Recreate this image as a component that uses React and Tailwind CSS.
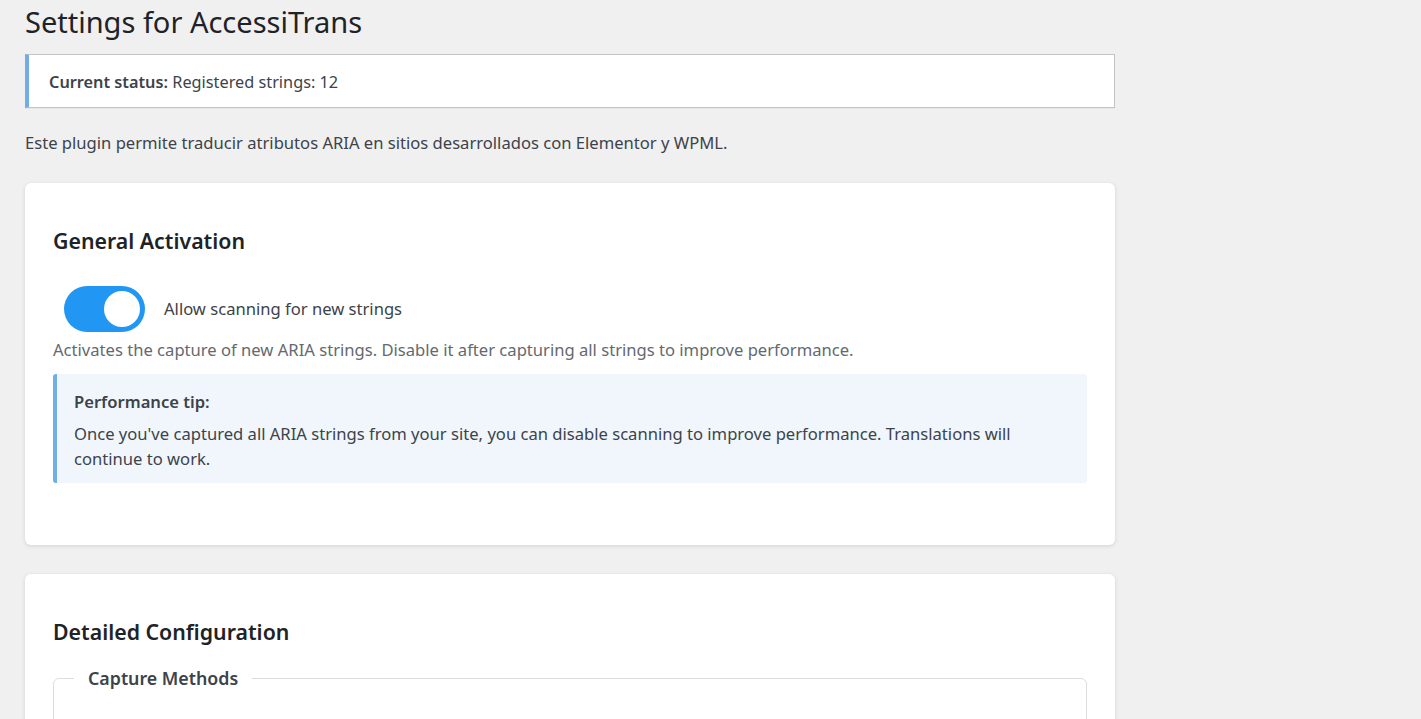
export default function App() {
  return (
    <div className="min-h-[719px] bg-[#f0f0f1] text-[#3c434a]" style={{ fontFamily: '"Noto Sans", "Open Sans", sans-serif' }}>
      <div className="w-[1090px] ml-[25px] pb-10">
        <h1 className="text-[29px] font-normal text-[#1d2327] pt-[3px] leading-[38px]">Settings for AccessiTrans</h1>
        <div className="mt-[13px] h-[54px] bg-white border border-[#c3c4c7] border-l-[4px] border-l-[#72aee6] flex items-center pl-[20px] pt-[2px] text-[16.3px] text-[#3c434a] shadow-[0_1px_1px_rgba(0,0,0,0.04)]">
          <span><span className="font-semibold">Current status:</span> Registered strings: 12</span>
        </div>
        <p className="mt-[23px] text-[16.6px] leading-[24px]">Este plugin permite traducir atributos ARIA en sitios desarrollados con Elementor y WPML.</p>

        <div className="mt-[28px] bg-white rounded-[6px] shadow-[0_1px_4px_rgba(0,0,0,0.12)] px-[28px] pt-[44px] pb-[62px]">
          <h2 className="text-[21.3px] font-semibold text-[#1d2327] leading-[28px]">General Activation</h2>
          <div className="mt-[31px] flex items-center ml-[11px]">
            <div className="relative w-[81px] h-[46px] rounded-full bg-[#2196f3] shrink-0">
              <div className="absolute right-[5px] top-[5px] w-[36px] h-[36px] rounded-full bg-white"></div>
            </div>
            <span className="ml-[19px] text-[16.6px] text-[#3c434a]">Allow scanning for new strings</span>
          </div>
          <p className="mt-[5px] text-[16.6px] text-[#646970] leading-[26px]">Activates the capture of new ARIA strings. Disable it after capturing all strings to improve performance.</p>
          <div className="mt-[11px] bg-[#f0f6fc] border-l-[4px] border-[#72aee6] rounded-[3px] pl-[17px] pr-[60px] pt-[15px] pb-[12px] text-[16.6px] leading-[25px] text-[#3c434a]">
            <p className="font-semibold">Performance tip:</p>
            <p className="mt-[7px]">Once you've captured all ARIA strings from your site, you can disable scanning to improve performance. Translations will continue to work.</p>
          </div>
        </div>

        <div className="mt-[29px] bg-white rounded-[6px] shadow-[0_1px_4px_rgba(0,0,0,0.12)] px-[28px] pt-[44px] pb-[40px]">
          <h2 className="text-[21.3px] font-semibold text-[#1d2327] leading-[28px]">Detailed Configuration</h2>
          <fieldset className="mt-[19px] border border-[#dcdcde] rounded-[6px] px-[20px] pb-[40px] h-[120px]">
            <legend className="px-[14px] text-[17.8px] font-semibold text-[#3c434a]">Capture Methods</legend>
          </fieldset>
        </div>
      </div>
    </div>
  );
}
